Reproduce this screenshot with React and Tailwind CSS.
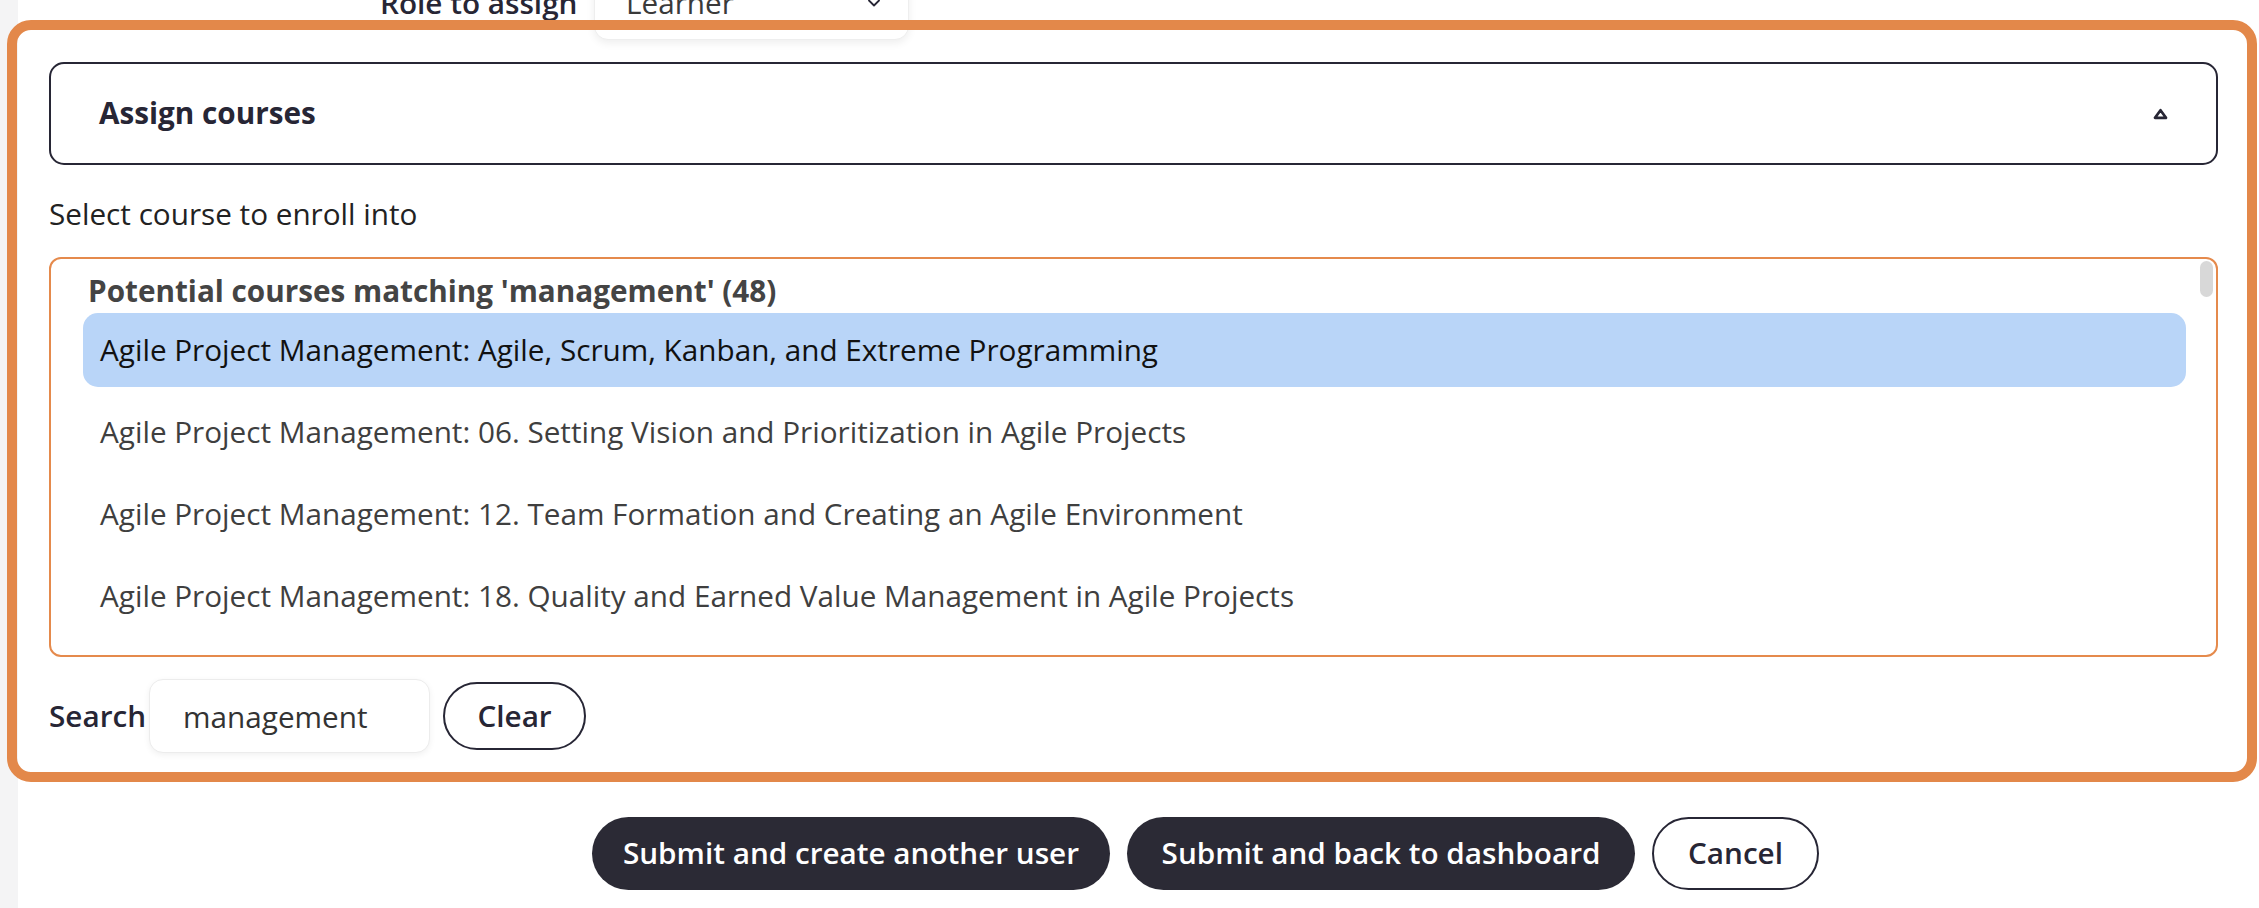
import React, { useState } from 'react';
import { ChevronDown } from 'lucide-react';

const courses = [
  'Agile Project Management: Agile, Scrum, Kanban, and Extreme Programming',
  'Agile Project Management: 06. Setting Vision and Prioritization in Agile Projects',
  'Agile Project Management: 12. Team Formation and Creating an Agile Environment',
  'Agile Project Management: 18. Quality and Earned Value Management in Agile Projects',
  'Agile Project Management: 24. Scaling Agile Across the Organization',
];

const App = () => {
  const [search, setSearch] = useState('management');

  return (
    <div className="flex h-[908px] overflow-hidden bg-white font-['Open_Sans',sans-serif] text-[29.7px] text-[#272635]">
      <div className="w-[18px] shrink-0 bg-[#f4f4f5]" />

      <div className="flex min-w-0 flex-1 flex-col">
        {/* role row, mostly scrolled out of view */}
        <div className="-mt-[34px] flex h-[74px] items-center pl-[362px]">
          <span className="w-[195px] whitespace-nowrap text-right font-semibold">Role to assign</span>
          <div className="ml-[19px] flex h-[74px] w-[315px] items-center justify-between rounded-[14px] border border-[#eeeeee] bg-white pl-[31px] pr-[24px] shadow-[0_3px_8px_rgba(0,0,0,0.07)]">
            <span className="text-[#3a3a3a]">Learner</span>
            <ChevronDown size={20} strokeWidth={2.2} />
          </div>
        </div>

        <section className="relative -ml-[11px] -mt-[20px] mr-[2px] rounded-[24px] border-[10px] border-[#e3884a] pb-[19px] pl-[32px] pr-[29px] pt-[32px]">
          <div className="flex h-[103px] items-center justify-between rounded-[15px] border-2 border-[#272635] px-[48px]">
            <span className="font-bold">Assign courses</span>
            <svg width="15" height="12" viewBox="0 0 15 12" fill="none">
              <path d="M7.5 2.2 L13 9.8 H2 Z" stroke="#272635" strokeWidth="2.7" strokeLinejoin="round" />
            </svg>
          </div>

          <div className="mb-[21px] mt-[27px] h-[44px] leading-[44px] text-[#222222]">Select course to enroll into</div>

          <div className="relative h-[400px] overflow-hidden rounded-[12px] border-2 border-[#e58a4c] pl-[32px] pr-[30px] pt-[10px]">
            <div className="ml-[5px] h-[44px] font-bold leading-[44px] text-[#444444]">
              Potential courses matching 'management' (48)
            </div>
            {courses.map((c, i) => (
              <div
                key={c}
                className={
                  i === 0
                    ? 'mb-[8px] flex h-[74px] items-center whitespace-nowrap rounded-[15px] bg-[#b9d5f8] pl-[17px] text-[#111111]'
                    : 'mb-[8px] flex h-[74px] items-center whitespace-nowrap rounded-[15px] pl-[17px] text-[#3f3f3f]'
                }
              >
                {c}
              </div>
            ))}
            <div className="absolute right-[3px] top-[2px] h-[36px] w-[13px] rounded-full bg-[#d8d8d8]" />
          </div>

          <div className="mt-[22px] flex h-[74px] items-center">
            <span className="font-semibold">Search</span>
            <input
              value={search}
              onChange={(e) => setSearch(e.target.value)}
              className="ml-[3px] h-[74px] w-[281px] rounded-[14px] border border-[#ececec] bg-white pl-[33px] text-[#333333] shadow-[0_2px_6px_rgba(0,0,0,0.06)] outline-none"
            />
            <button className="ml-[13px] h-[68px] w-[143px] rounded-full border-2 border-[#272635] font-semibold">
              Clear
            </button>
          </div>
        </section>

        <div className="mt-[35px] flex gap-[17px] pl-[574px]">
          <button className="h-[73px] w-[518px] rounded-full bg-[#2b2a35] font-semibold text-white">
            Submit and create another user
          </button>
          <button className="h-[73px] w-[508px] rounded-full bg-[#2b2a35] font-semibold text-white">
            Submit and back to dashboard
          </button>
          <button className="h-[73px] w-[167px] rounded-full border-2 border-[#272635] bg-white font-semibold">
            Cancel
          </button>
        </div>
      </div>
    </div>
  );
};

export default App;
